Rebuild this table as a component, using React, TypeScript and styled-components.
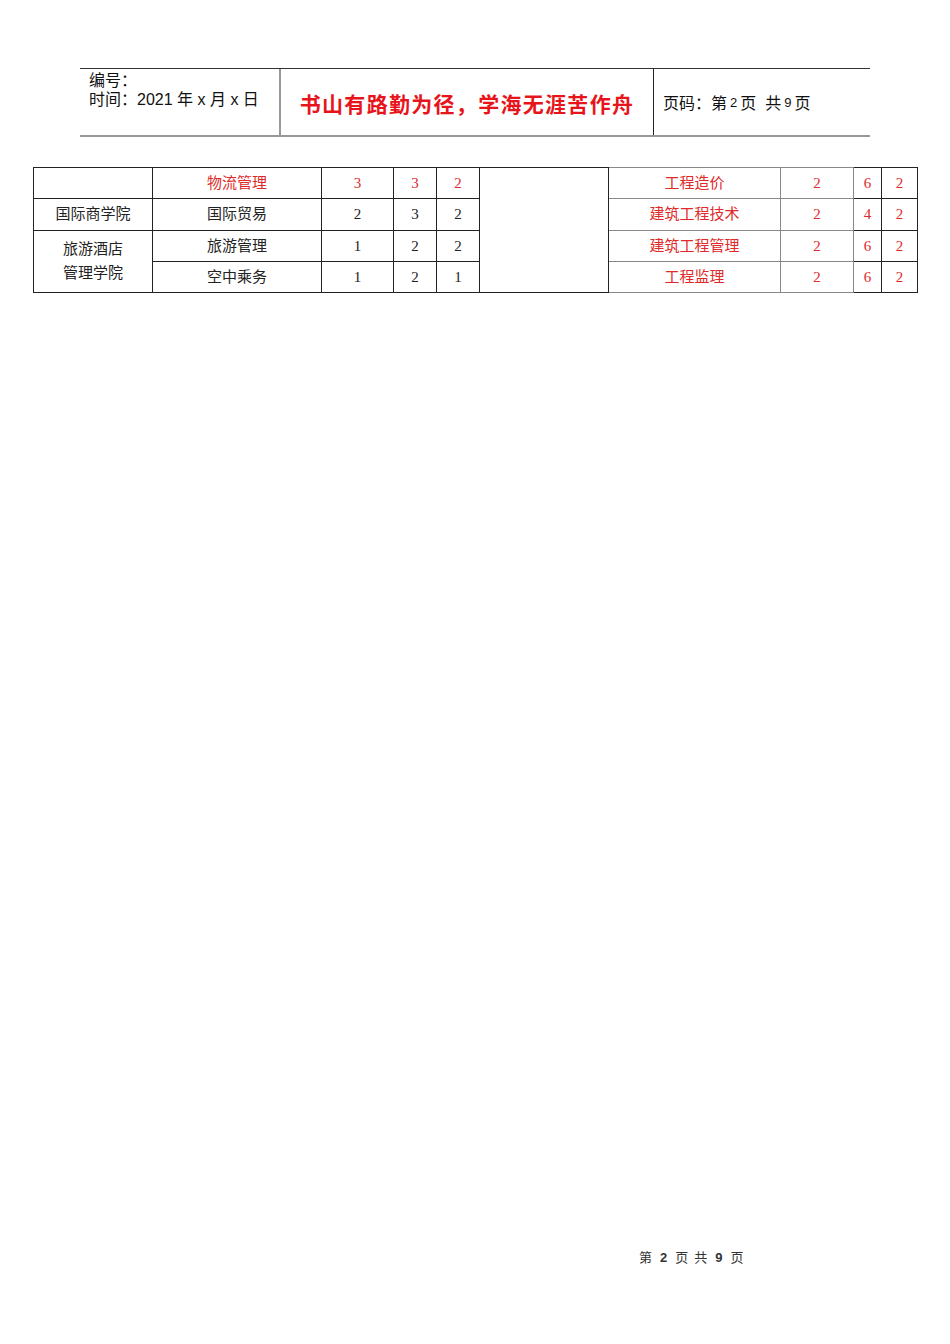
import React from "react";
import styled, { createGlobalStyle } from "styled-components";

const Global = createGlobalStyle`
  html, body { margin: 0; padding: 0; background: #fff; }
  body { width: 950px; height: 1344px; font-family: "Liberation Sans", "Noto Sans CJK SC", sans-serif; }
`;

const Page = styled.div`
  position: relative;
  width: 950px;
  height: 1344px;
  padding-top: 68px;
  box-sizing: border-box;
`;

const Header = styled.div`
  display: grid;
  grid-template-columns: 201px 373px 216px;
  margin-left: 80px;
  width: 790px;
  height: 66px;
  border-top: 1px solid #333;
  border-bottom: 2px solid #999;
`;

const HeadLeft = styled.div`
  padding: 2px 0 0 9px;
  font-size: 16px;
  line-height: 19px;
  color: #111;
  border-right: 2px solid #999;
`;

const HeadTitle = styled.div`
  display: flex;
  align-items: center;
  justify-content: center;
  padding-top: 1px;
  font-family: "Noto Sans CJK SC", sans-serif;
  font-weight: 700;
  font-size: 21px;
  color: #e8141c;
  letter-spacing: 1.3px;
  border-right: 1px solid #222;
`;

const HeadRight = styled.div`
  display: flex;
  align-items: center;
  padding: 0 0 0 9px;
  font-size: 16px;
  color: #111;
`;

const Small = styled.span`
  font-size: 13px;
  margin: 0 3px;
`;

const Table = styled.table`
  border-collapse: collapse;
  margin: 30px 0 0 33px;
  table-layout: fixed;
  font-family: "Liberation Serif", "Noto Sans CJK SC", serif;
  font-size: 15px;
`;

const Cell = styled.td<{ $red?: boolean; $grey?: boolean; $w?: number }>`
  width: ${(p) => (p.$w ? p.$w - 1 + "px" : "auto")};
  height: 30.3px;
  padding: 0;
  text-align: center;
  vertical-align: middle;
  color: ${(p) => (p.$red ? "#e02a2a" : "#222")};
  border: 1px solid ${(p) => (p.$grey ? "#888" : "#222")};
  line-height: 24px;
`;

const Footer = styled.div`
  position: absolute;
  left: 639px;
  top: 1247px;
  display: flex;
  align-items: baseline;
  gap: 6px;
  font-size: 13px;
  color: #333;
`;

const Bold = styled.b`
  font-family: "Liberation Sans", sans-serif;
  font-weight: 700;
  padding: 0 2px;
`;

const widths = [119, 169, 72, 43, 43, 129, 172, 73, 28, 36];

const left = [
  ["物流管理", "3", "3", "2"],
  ["国际贸易", "2", "3", "2"],
  ["旅游管理", "1", "2", "2"],
  ["空中乘务", "1", "2", "1"],
];
const right = [
  ["工程造价", "2", "6", "2"],
  ["建筑工程技术", "2", "4", "2"],
  ["建筑工程管理", "2", "6", "2"],
  ["工程监理", "2", "6", "2"],
];

export default function App() {
  return (
    <Page>
      <Global />
      <Header>
        <HeadLeft>
          编号：
          <br />
          时间：2021 年 x 月 x 日
        </HeadLeft>
        <HeadTitle>书山有路勤为径，学海无涯苦作舟</HeadTitle>
        <HeadRight>
          页码：第<Small>2</Small>页&nbsp;&nbsp;共<Small>9</Small>页
        </HeadRight>
      </Header>
      <Table>
        <tbody>
          {left.map((l, i) => {
            const red = i === 0;
            const r = right[i];
            return (
              <tr key={i}>
                {i === 0 && <Cell $w={widths[0]} />}
                {i === 1 && <Cell $w={widths[0]}>国际商学院</Cell>}
                {i === 2 && (
                  <Cell $w={widths[0]} rowSpan={2}>
                    旅游酒店
                    <br />
                    管理学院
                  </Cell>
                )}
                {l.map((t, j) => (
                  <Cell key={j} $w={i === 0 ? widths[j + 1] : undefined} $red={red}>
                    {t}
                  </Cell>
                ))}
                {i === 0 && <Cell $w={widths[5]} rowSpan={4} />}
                {r.map((t, j) => (
                  <Cell key={"r" + j} $w={i === 0 ? widths[j + 6] : undefined} $red $grey={j < 2}>
                    {t}
                  </Cell>
                ))}
              </tr>
            );
          })}
        </tbody>
      </Table>
      <Footer>
        <span>第</span>
        <Bold>2</Bold>
        <span>页</span>
        <span>共</span>
        <Bold>9</Bold>
        <span>页</span>
      </Footer>
    </Page>
  );
}
